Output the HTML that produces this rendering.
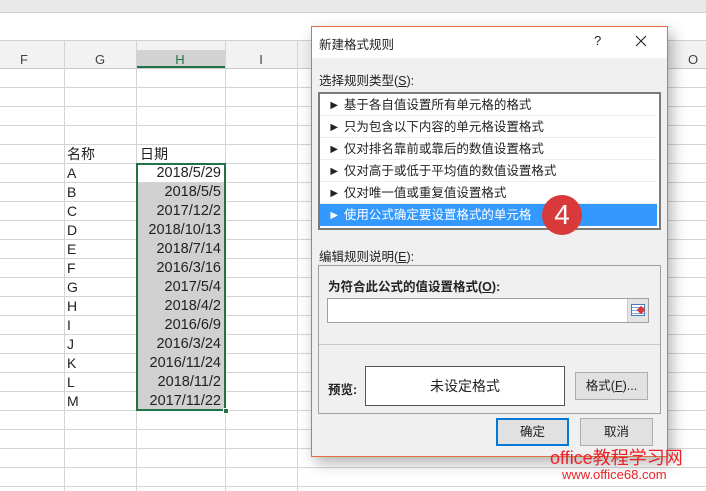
<!DOCTYPE html>
<html><head><meta charset="utf-8"><style>
*{margin:0;padding:0;box-sizing:border-box}
body{width:706px;height:491px;overflow:hidden;background:#fff;position:relative;font-family:"Liberation Sans","Microsoft YaHei","Noto Sans CJK SC",sans-serif;font-size:13px;color:#222}
.a{position:absolute}
.hl{position:absolute;left:0;width:706px;height:1px;background:#d4d4d4}
.vl{position:absolute;top:40px;width:1px;height:451px;background:#d4d4d4}
.col{position:absolute;top:52px;font-size:13px;color:#444;width:40px;text-align:center}
.cell{position:absolute;font-size:14px;color:#222;line-height:19px}
.d{position:absolute;left:137px;width:87px;text-align:right;padding-right:3px;font-size:14.5px;line-height:19px;height:19px}
.it{position:absolute;left:320px;width:337px;height:22px;line-height:22px;font-size:12.5px;padding-left:8px;border-bottom:1px solid #eee}
.btn{position:absolute;background:#e1e1e1;border:1px solid #adadad;text-align:center;font-size:12.5px}
</style></head><body>
<div class="a" style="left:0;top:0;width:706px;height:12px;background:#e8e8e8"></div>
<div class="a" style="left:0;top:12px;width:706px;height:1px;background:#d0d0d0"></div>
<div class="a" style="left:0;top:40px;width:706px;height:28px;background:#f2f2f2;border-top:1px solid #cfcfcf"></div>
<div class="a" style="left:137px;top:50px;width:88px;height:18px;background:#d2d2d2;border-bottom:2px solid #217346"></div>
<div class="col" style="left:4px">F</div>
<div class="col" style="left:80px">G</div>
<div class="col" style="left:160px;color:#217346">H</div>
<div class="col" style="left:241px">I</div>
<div class="col" style="left:673px">O</div>
<div class="hl" style="top:68px;background:#c8c8c8"></div>
<div class="hl" style="top:87px"></div><div class="hl" style="top:106px"></div><div class="hl" style="top:125px"></div><div class="hl" style="top:144px"></div><div class="hl" style="top:163px"></div><div class="hl" style="top:182px"></div><div class="hl" style="top:201px"></div><div class="hl" style="top:220px"></div><div class="hl" style="top:239px"></div><div class="hl" style="top:258px"></div><div class="hl" style="top:277px"></div><div class="hl" style="top:296px"></div><div class="hl" style="top:315px"></div><div class="hl" style="top:334px"></div><div class="hl" style="top:353px"></div><div class="hl" style="top:372px"></div><div class="hl" style="top:391px"></div><div class="hl" style="top:410px"></div><div class="hl" style="top:429px"></div><div class="hl" style="top:448px"></div><div class="hl" style="top:467px"></div><div class="hl" style="top:486px"></div>
<div class="vl" style="left:64px"></div><div class="vl" style="left:136px"></div><div class="vl" style="left:225px"></div><div class="vl" style="left:297px"></div>
<div class="a" style="left:137px;top:183px;width:88px;height:227px;background:#d0d0d0"></div>
<div class="a" style="left:136px;top:163px;width:90px;height:248px;border:2px solid #217346"></div>
<div class="a" style="left:223px;top:408px;width:6px;height:6px;background:#217346;border:1px solid #fff"></div>
<div class="cell" style="left:67px;top:145px">名称</div><div class="cell" style="left:140px;top:145px">日期</div>
<div class="cell" style="left:67px;top:164px">A<br>B<br>C<br>D<br>E<br>F<br>G<br>H<br>I<br>J<br>K<br>L<br>M</div>
<div class="d" style="top:164px">2018/5/29</div><div class="d" style="top:183px">2018/5/5</div><div class="d" style="top:202px">2017/12/2</div><div class="d" style="top:221px">2018/10/13</div><div class="d" style="top:240px">2018/7/14</div><div class="d" style="top:259px">2016/3/16</div><div class="d" style="top:278px">2017/5/4</div><div class="d" style="top:297px">2018/4/2</div><div class="d" style="top:316px">2016/6/9</div><div class="d" style="top:335px">2016/3/24</div><div class="d" style="top:354px">2016/11/24</div><div class="d" style="top:373px">2018/11/2</div><div class="d" style="top:392px">2017/11/22</div>
<div class="a" style="left:311px;top:26px;width:357px;height:431px;background:#f0f0f0;border:1px solid #e0703f;box-shadow:4px 6px 14px rgba(0,0,0,.3)"></div>
<div class="a" style="left:312px;top:27px;width:355px;height:31px;background:#fff"></div>
<div class="a" style="left:319px;top:34px;font-size:12.5px">新建格式规则</div>
<div class="a" style="left:594px;top:33px;font-size:13px">?</div>
<svg class="a" style="left:635px;top:35px" width="12" height="12"><path d="M1 1L11 11M11 1L1 11" stroke="#222" stroke-width="1.1"/></svg>
<div class="a" style="left:319px;top:70px;font-size:12.5px">选择规则类型(<u>S</u>):</div>
<div class="a" style="left:318px;top:92px;width:343px;height:138px;background:#fff;border:2px solid #7a7a7a"></div>
<div class="it" style="top:94px">► 基于各自值设置所有单元格的格式</div>
<div class="it" style="top:116px">► 只为包含以下内容的单元格设置格式</div>
<div class="it" style="top:138px">► 仅对排名靠前或靠后的数值设置格式</div>
<div class="it" style="top:160px">► 仅对高于或低于平均值的数值设置格式</div>
<div class="it" style="top:182px">► 仅对唯一值或重复值设置格式</div>
<div class="it" style="top:204px;background:#3399ff;color:#fff;border:0">► 使用公式确定要设置格式的单元格</div>
<div class="a" style="left:542px;top:195px;width:40px;height:40px;border-radius:50%;background:#d8393a;color:#fff;font-size:28px;text-align:center;line-height:40px">4</div>
<div class="a" style="left:319px;top:246px;font-size:12.5px">编辑规则说明(<u>E</u>):</div>
<div class="a" style="left:318px;top:265px;width:343px;height:149px;border:1px solid #a0a0a0"></div>
<div class="a" style="left:328px;top:276px;font-size:12.5px;font-weight:bold">为符合此公式的值设置格式(<u>O</u>):</div>
<div class="a" style="left:327px;top:298px;width:322px;height:25px;background:#fff;border:1px solid #a0a0a0"></div>
<div class="a" style="left:627px;top:299px;width:21px;height:23px;background:#e4e4e4;border-left:1px solid #ccc"><div style="margin:5px 3px;width:14px;height:12px;border:1px solid #4a7fbf;background:repeating-linear-gradient(#fff 0 2px,#7aa7dd 2px 3px)"></div><div class="a" style="left:10px;top:8px;width:6px;height:6px;background:#d33;transform:rotate(45deg)"></div></div>
<div class="a" style="left:319px;top:344px;width:341px;height:1px;background:#c8c8c8"></div>
<div class="a" style="left:328px;top:379px;font-size:12.5px;font-weight:bold">预览:</div>
<div class="a" style="left:365px;top:366px;width:200px;height:40px;background:#fff;border:1px solid #555;text-align:center;line-height:38px;font-size:14px">未设定格式</div>
<div class="btn" style="left:575px;top:372px;width:73px;height:28px;line-height:26px">格式(<u>F</u>)...</div>
<div class="btn" style="left:496px;top:418px;width:73px;height:28px;line-height:24px;border:2px solid #0078d7">确定</div>
<div class="btn" style="left:580px;top:418px;width:73px;height:28px;line-height:26px">取消</div>
<div class="a" style="left:550px;top:444px;font-size:18px;color:#e8232a;white-space:nowrap">office教程学习网</div>
<div class="a" style="left:562px;top:467px;font-size:13px;color:#e8232a;white-space:nowrap">www.office68.com</div>
</body></html>
